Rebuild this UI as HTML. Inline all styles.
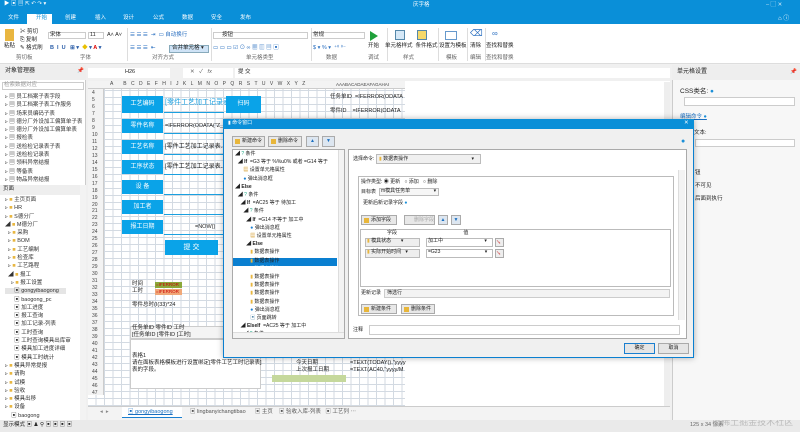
<!DOCTYPE html>
<html><head><meta charset="utf-8"><style>
*{margin:0;padding:0;box-sizing:border-box}
body{width:800px;height:432px;overflow:hidden;background:#f0f0f0;font-family:"Liberation Sans","Noto Sans CJK SC",sans-serif;font-size:6px;color:#222;position:relative}
.a{position:absolute}
.t{position:absolute;white-space:nowrap;font-size:5.5px;line-height:7px}
.blue{background:#0aa3e8;color:#fff;text-align:center;font-size:6px}
.btn{position:absolute;background:#e8e8e8;border:1px solid #aaa;font-size:5px;line-height:8px;padding-left:9px;white-space:nowrap}
.ico{position:absolute;width:5px;height:5px;background:#e8b63a;left:2px;top:1.5px}
</style></head><body>
<div class="a" style="left:0;top:0;width:800px;height:24px;background:#0a8fd8"></div>
<div class="t" style="left:4px;top:1px;color:#fff">▶ ▣ ▤ ⇱ ↶ ↷ ▾</div>
<div class="t" style="left:413px;top:2px;color:#fff">庆字格</div>
<div class="t" style="left:766px;top:2px;color:#cfe8f7">–  ▢  ✕</div>
<div class="t" style="left:778px;top:16px;color:#fff;font-size:6px">⌂ ⓘ</div>
<div class="a" style="left:27px;top:14px;width:25px;height:11px;background:#fff"></div>
<div class="t" style="left:8px;top:15px;color:#fff">文件</div>
<div class="t" style="left:36px;top:15px;color:#0a8fd8">开始</div>
<div class="t" style="left:65px;top:15px;color:#fff">创建</div>
<div class="t" style="left:95px;top:15px;color:#fff">插入</div>
<div class="t" style="left:123px;top:15px;color:#fff">设计</div>
<div class="t" style="left:153px;top:15px;color:#fff">公式</div>
<div class="t" style="left:182px;top:15px;color:#fff">数据</div>
<div class="t" style="left:211px;top:15px;color:#fff">安全</div>
<div class="t" style="left:240px;top:15px;color:#fff">发布</div>
<div class="a" style="left:0;top:24px;width:800px;height:40px;background:#fff;border-bottom:1px solid #ddd"></div>
<div class="a" style="left:5px;top:29px;width:9px;height:12px;background:#e9b640"></div>
<div class="t" style="left:4px;top:43px">粘贴</div>
<div class="t" style="left:20px;top:28px;line-height:8px">✂ 剪切<br>⎘ 复制<br>✎ 格式刷</div>
<div class="t" style="left:16px;top:55px;color:#666">剪切板</div>
<div class="a" style="left:48px;top:32px;width:38px;height:7px;border:1px solid #ccc"></div><div class="t" style="left:50px;top:32px">宋体</div>
<div class="a" style="left:88px;top:32px;width:16px;height:7px;border:1px solid #ccc"></div><div class="t" style="left:90px;top:32px">11</div>
<div class="t" style="left:107px;top:32px">A˄ A˅</div>
<div class="t" style="left:50px;top:45px;color:#2a5da8;font-weight:bold">B &nbsp;I &nbsp;U &nbsp;&nbsp;⊞ ▾ &nbsp;<span style="color:#e8c000">◆</span> ▾ <span style="color:#d00">A</span> ▾</div>
<div class="t" style="left:80px;top:55px;color:#666">字体</div>
<div class="a" style="left:127px;top:28px;width:1px;height:33px;background:#ddd"></div>
<div class="t" style="left:130px;top:32px;color:#2a6fc0">☰ ☰ ☰ &nbsp;⇥ &nbsp;▭ 自动换行</div>
<div class="t" style="left:130px;top:45px;color:#2a6fc0">☰ ☰ ☰ &nbsp;⇤</div>
<div class="a" style="left:169px;top:45px;width:40px;height:8px;background:#cfe3f6;border:1px solid #8ab"></div><div class="t" style="left:172px;top:45px">合并单元格 ▾</div>
<div class="t" style="left:152px;top:55px;color:#666">对齐方式</div>
<div class="a" style="left:211px;top:28px;width:1px;height:33px;background:#ddd"></div>
<div class="a" style="left:213px;top:32px;width:95px;height:7px;border:1px solid #ccc"></div><div class="t" style="left:222px;top:32px">按钮</div>
<div class="t" style="left:213px;top:45px;color:#2a6fc0">▭ ▭ ▭ ☑ ⊙ ∞ ▦ ▥ ▤ ▣</div>
<div class="t" style="left:246px;top:55px;color:#666">单元格类型</div>
<div class="a" style="left:311px;top:28px;width:1px;height:33px;background:#ddd"></div>
<div class="a" style="left:311px;top:32px;width:54px;height:7px;border:1px solid #ccc"></div><div class="t" style="left:313px;top:32px">常规</div>
<div class="t" style="left:313px;top:45px;color:#2a6fc0">$ ▾ % ▾ &nbsp;⁺⁰ ⁰⁻</div>
<div class="t" style="left:326px;top:55px;color:#666">数据</div>
<div class="a" style="left:370px;top:31px;width:0;height:0;border-left:8px solid #1fa03a;border-top:5px solid transparent;border-bottom:5px solid transparent"></div>
<div class="t" style="left:368px;top:43px">开始</div><div class="t" style="left:368px;top:55px;color:#666">调试</div>
<div class="a" style="left:387px;top:28px;width:1px;height:33px;background:#ddd"></div>
<div class="a" style="left:395px;top:30px;width:10px;height:10px;border:1px solid #58a;background:#d5e8f7"></div>
<div class="a" style="left:417px;top:30px;width:10px;height:10px;border:1px solid #58a;background:#f5d96a"></div>
<div class="t" style="left:385px;top:43px">单元格样式 &nbsp;条件格式</div>
<div class="t" style="left:403px;top:55px;color:#666">样式</div>
<div class="a" style="left:438px;top:28px;width:1px;height:33px;background:#ddd"></div>
<div class="a" style="left:445px;top:31px;width:12px;height:9px;border:1px solid #69c"></div>
<div class="t" style="left:439px;top:43px">设置为模板</div><div class="t" style="left:446px;top:55px;color:#666">模板</div>
<div class="a" style="left:467px;top:28px;width:1px;height:33px;background:#ddd"></div>
<div class="t" style="left:470px;top:30px;color:#2a6fc0;font-size:9px">⌫</div>
<div class="t" style="left:470px;top:43px">清除</div><div class="t" style="left:470px;top:55px;color:#666">编辑</div>
<div class="a" style="left:485px;top:28px;width:1px;height:33px;background:#ddd"></div>
<div class="t" style="left:492px;top:30px;color:#2a6fc0;font-size:8px">∞</div>
<div class="t" style="left:486px;top:43px">查找和替换</div><div class="t" style="left:486px;top:55px;color:#666">查找和替换</div>
<div class="a" style="left:0;top:65px;width:86px;height:355px;background:#fff;border-right:1px solid #ccc"></div>
<div class="a" style="left:0;top:65px;width:86px;height:15px;background:#eee"></div>
<div class="t" style="left:5px;top:68px;font-size:6px">对象管理器</div><div class="t" style="left:77px;top:68px">📌</div>
<div class="a" style="left:2px;top:82px;width:82px;height:8px;border:1px solid #ccc"></div>
<div class="t" style="left:4px;top:82px;color:#999">检索数据对应</div>
<div class="t" style="left:5px;top:93px;line-height:8.3px;color:#333">▹ ▤ 员工档案子表字段<br>▹ ▤ 员工档案子表工作服务<br>▹ ▤ 场来员编码子表<br>▹ ▤ 德分厂外设加工偏算单子表<br>▹ ▤ 德分厂外设加工偏算单表<br>▹ ▤ 报检表<br>▹ ▤ 送检检记录表子表<br>▹ ▤ 送检检记录表<br>▹ ▤ 领料异常结报<br>▹ ▤ 等备表<br>▹ ▤ 物品异常结报</div>
<div class="a" style="left:0;top:185px;width:80px;height:10px;background:#eee"></div>
<div class="t" style="left:3px;top:186px">页面</div>
<div class="t" style="left:5px;top:196px;line-height:8.3px;color:#333">▹ <span style="color:#e8b640">■</span> 主页页面<br>▹ <span style="color:#e8b640">■</span> HR<br>▹ <span style="color:#e8b640">■</span> S德分厂<br>◢ <span style="color:#e8b640">■</span> M德分厂<br>&nbsp;&nbsp;▹ <span style="color:#e8b640">■</span> 采购<br>&nbsp;&nbsp;▹ <span style="color:#e8b640">■</span> BOM<br>&nbsp;&nbsp;▹ <span style="color:#e8b640">■</span> 工艺编制<br>&nbsp;&nbsp;▹ <span style="color:#e8b640">■</span> 检查库<br>&nbsp;&nbsp;▹ <span style="color:#e8b640">■</span> 工艺路程<br>&nbsp;&nbsp;◢ <span style="color:#e8b640">■</span> 报工<br>&nbsp;&nbsp;&nbsp;&nbsp;▹ <span style="color:#e8b640">■</span> 报工设置<br><span style="background:#e5e5e5">&nbsp;&nbsp;&nbsp;&nbsp;&nbsp;&nbsp;▣ gongyibaogong&nbsp;&nbsp;&nbsp;&nbsp;&nbsp;</span><br>&nbsp;&nbsp;&nbsp;&nbsp;&nbsp;&nbsp;▣ baogong_pc<br>&nbsp;&nbsp;&nbsp;&nbsp;&nbsp;&nbsp;▣ 加工进度<br>&nbsp;&nbsp;&nbsp;&nbsp;&nbsp;&nbsp;▣ 报工查询<br>&nbsp;&nbsp;&nbsp;&nbsp;&nbsp;&nbsp;▣ 加工记录-列表<br>&nbsp;&nbsp;&nbsp;&nbsp;&nbsp;&nbsp;▣ 工时查询<br>&nbsp;&nbsp;&nbsp;&nbsp;&nbsp;&nbsp;▣ 工时查询模具出库审<br>&nbsp;&nbsp;&nbsp;&nbsp;&nbsp;&nbsp;▣ 模具加工进度详细<br>&nbsp;&nbsp;&nbsp;&nbsp;&nbsp;&nbsp;▣ 模具工时统计<br>▹ <span style="color:#e8b640">■</span> 模具异常提报<br>▹ <span style="color:#e8b640">■</span> 请购<br>▹ <span style="color:#e8b640">■</span> 试模<br>▹ <span style="color:#e8b640">■</span> 验收<br>▹ <span style="color:#e8b640">■</span> 模具出移<br>▹ <span style="color:#e8b640">■</span> 设备<br>&nbsp;&nbsp;&nbsp;&nbsp;▣ baogong</div>
<div class="a" style="left:80px;top:185px;width:6px;height:235px;background:#f3f3f3"></div>
<div class="a" style="left:88px;top:68px;width:82px;height:10px;background:#fff"></div>
<div class="t" style="left:125px;top:69px">H26</div>
<div class="a" style="left:183px;top:68px;width:50px;height:10px;background:#fff"></div>
<div class="t" style="left:190px;top:69px;color:#666">✕ &nbsp;&nbsp;✓ &nbsp;&nbsp;<i>fx</i></div>
<div class="a" style="left:235px;top:68px;width:435px;height:10px;background:#fff"></div>
<div class="t" style="left:238px;top:69px">提 交</div>
<div class="a" style="left:88px;top:81px;width:582px;height:325px;background:#fff"></div>
<div class="a" style="left:88px;top:81px;width:317px;height:325px;background-image:linear-gradient(#d3dae2 1px,transparent 1px),linear-gradient(90deg,#d3dae2 1px,transparent 1px);background-size:8.5px 7px;background-position:16px 9px"></div>
<div class="a" style="left:88px;top:81px;width:317px;height:8px;background:#f3f3f3;border-bottom:1px solid #ccc"></div>
<div class="t" style="left:110px;top:81px;font-size:5px;letter-spacing:4.4px;color:#444">A BCDEFHIJKLMNOPQRSTUVWXYZ</div>
<div class="t" style="left:336px;top:81px;font-size:4.5px;color:#444">AAABACADAEAFAGAHAI</div>
<div class="a" style="left:88px;top:89px;width:16px;height:306px;background:#f3f3f3;border-right:1px solid #ccc"></div>
<div class="t" style="left:92px;top:90px;font-size:5px;line-height:6.97px;color:#444">4<br>5<br>6<br>7<br>8<br>9<br>10<br>11<br>12<br>13<br>14<br>15<br>16<br>17<br>18<br>19<br>20<br>21<br>22<br>23<br>24<br>25<br>26<br>27<br>28<br>29<br>30<br>31<br>32<br>33<br>34<br>35<br>36<br>37<br>38<br>39<br>40<br>41<br>42<br>43<br>44<br>45<br>46<br>47</div>
<div class="a blue" style="left:122px;top:96px;width:41px;height:17px;line-height:17px">工艺编码</div>
<div class="t" style="left:165px;top:99px;color:#1aa0e0;font-size:7px">[零件工艺加工记录表</div>
<div class="a blue" style="left:226px;top:96px;width:35px;height:17px;line-height:17px">扫码</div>
<div class="a blue" style="left:122px;top:119px;width:41px;height:14px;line-height:14px">零件名称</div>
<div class="t" style="left:165px;top:123px">=IFERROR(ODATA("Z_Y_</div>
<div class="a blue" style="left:122px;top:140px;width:41px;height:14px;line-height:14px">工艺名称</div>
<div class="t" style="left:165px;top:144px;font-size:6px">[零件工艺加工记录表.工</div>
<div class="a blue" style="left:122px;top:160px;width:41px;height:14px;line-height:14px">工序状态</div>
<div class="t" style="left:165px;top:164px;font-size:6px">[零件工艺加工记录表.工</div>
<div class="a blue" style="left:122px;top:180px;width:41px;height:14px;line-height:14px">设 备</div>
<div class="a blue" style="left:122px;top:200px;width:41px;height:14px;line-height:14px">加工者</div>
<div class="a blue" style="left:122px;top:220px;width:41px;height:14px;line-height:14px">报工日期</div>
<div class="t" style="left:195px;top:224px">=NOW()</div>
<div class="a" style="left:164px;top:112px;width:60px;height:1px;background:#1aa0e0"></div>
<div class="a" style="left:164px;top:133px;width:60px;height:1px;background:#1aa0e0"></div>
<div class="a" style="left:164px;top:154px;width:60px;height:1px;background:#1aa0e0"></div>
<div class="a" style="left:164px;top:174px;width:60px;height:1px;background:#1aa0e0"></div>
<div class="a" style="left:164px;top:194px;width:60px;height:1px;background:#1aa0e0"></div>
<div class="a" style="left:164px;top:214px;width:60px;height:1px;background:#1aa0e0"></div>
<div class="a" style="left:164px;top:234px;width:60px;height:1px;background:#1aa0e0"></div>
<div class="a blue" style="left:165px;top:240px;width:53px;height:15px;line-height:15px;font-size:7px">提 交</div>
<div class="t" style="left:132px;top:281px">时间</div>
<div class="a" style="left:155px;top:282px;width:27px;height:6px;background:#8aa83a"></div><div class="t" style="left:156px;top:281px;color:#c00;font-size:4.5px">=IFERROR</div>
<div class="t" style="left:132px;top:288px">工时</div>
<div class="a" style="left:155px;top:289px;width:27px;height:6px;background:#f0a878"></div><div class="t" style="left:156px;top:288px;color:#c00;font-size:4.5px">=IFERROR</div>
<div class="t" style="left:132px;top:302px">零件总时(I(33)*24</div>
<div class="a" style="left:130px;top:326px;width:130px;height:13px;background:#f4f4f4;border:1px solid #ccc"></div>
<div class="t" style="left:132px;top:325px">任务单ID 零件ID 工时<br>[任务单ID [零件ID [工时]</div>
<div class="a" style="left:130px;top:339px;width:131px;height:50px;border:1px solid #ccc;background:#fff"></div>
<div class="t" style="left:132px;top:353px">表格1<br>请在面板表格模板进行设置绑定[零件工艺工时记录表]<br>表的字段。</div>
<div class="t" style="left:296px;top:360px">今天日期<br>上次报工日期</div>
<div class="t" style="left:350px;top:360px">=TEXT(TODAY(),"yyyy<br>=TEXT(AC40,"yyyy/M</div>
<div class="a" style="left:272px;top:375px;width:74px;height:7px;background:#c5d89c"></div>
<div class="t" style="left:330px;top:90px;line-height:14px">任务单ID &nbsp;=IFERROR(ODATA<br>零件ID &nbsp;&nbsp;&nbsp;=IFERROR(ODATA</div>
<div class="a" style="left:664px;top:82px;width:6px;height:324px;background:#eee"></div>
<div class="a" style="left:88px;top:406px;width:582px;height:14px;background:#f3f3f3;border-top:1px solid #ccc"></div>
<div class="t" style="left:100px;top:409px;color:#888">◂ &nbsp;▸</div>
<div class="a" style="left:122px;top:407px;width:60px;height:11px;background:#fff;border-bottom:1px solid #1a7fd0"></div>
<div class="t" style="left:128px;top:409px;color:#1a6fc0;text-decoration:underline">▣ gongyibaogong</div>
<div class="t" style="left:190px;top:409px;color:#555">▣ lingbanyichangtibao &nbsp;&nbsp;&nbsp;&nbsp;&nbsp;▣ 主页 &nbsp;&nbsp;&nbsp;▣ 验收入库-列表 &nbsp;&nbsp;▣ 工艺列 ⋯</div>
<div class="a" style="left:0;top:420px;width:800px;height:12px;background:#eaeaea"></div>
<div class="t" style="left:3px;top:422px">显示模式 ▣ ♟ ⚲ ▣ ▣ ▣ ▣</div>
<div class="t" style="left:690px;top:422px;color:#666">125 x 34 像素</div>
<div class="t" style="left:712px;top:417px;color:#bbb;font-size:9px;line-height:11px">@稀土掘金技术社区</div>
<div class="a" style="left:672px;top:65px;width:128px;height:355px;background:#f7f7f7;border-left:1px solid #ccc"></div>
<div class="a" style="left:672px;top:65px;width:128px;height:15px;background:#eee"></div>
<div class="t" style="left:677px;top:69px;font-size:6px">单元格设置</div><div class="t" style="left:790px;top:69px">📌</div>
<div class="t" style="left:680px;top:88px;font-size:6.5px">CSS类名: <span style="color:#1a8fd8">●</span></div>
<div class="a" style="left:684px;top:97px;width:111px;height:9px;background:#fff;border:1px solid #ccc"></div>
<div class="t" style="left:680px;top:114px;color:#1a6fc0;text-decoration:underline">编辑命令 <span style="color:#1a8fd8">●</span></div>
<div class="t" style="left:694px;top:130px">文本:</div>
<div class="a" style="left:695px;top:139px;width:100px;height:8px;background:#fff;border:1px solid #ccc"></div>
<div class="t" style="left:695px;top:167px;line-height:13px">钮<br>不可见<br>后面到执行</div>
<div class="a" style="left:223px;top:119px;width:471px;height:239px;background:#f0f0f0;border:1px solid #0a7fd0;box-shadow:0 0 6px rgba(0,0,0,.3)"></div>
<div class="a" style="left:223px;top:119px;width:471px;height:10px;background:#0a8fd8"></div>
<div class="t" style="left:228px;top:120px;color:#fff;font-size:5px">▮ 命令窗口</div>
<div class="t" style="left:684px;top:120px;color:#fff">✕</div>
<div class="btn" style="left:232px;top:136px;width:33px;height:11px">新建命令<span class="ico"></span></div>
<div class="btn" style="left:268px;top:136px;width:34px;height:11px">删除命令<span class="ico"></span></div>
<div class="a" style="left:306px;top:136px;width:13px;height:11px;background:#dde6f0;border:1px solid #aaa;color:#1a6fc0;font-size:5px;text-align:center;line-height:9px">▲</div>
<div class="a" style="left:322px;top:136px;width:13px;height:11px;background:#dde6f0;border:1px solid #aaa;color:#1a6fc0;font-size:5px;text-align:center;line-height:9px">▼</div>
<div class="t" style="left:681px;top:138px;color:#1a8fd8;font-size:7px">●</div>
<div class="a" style="left:232px;top:149px;width:113px;height:190px;background:#fff;border:1px solid #aaa"></div>
<div class="a" style="left:233px;top:258px;width:104px;height:8px;background:#0a7fd0"></div>
<div class="t" style="left:235px;top:150px;line-height:8.2px;font-size:5px">◢ <span style="color:#2a8">?</span> 条件<br>&nbsp;&nbsp;◢ <b>If</b> &nbsp;=G3 等于 %%u0% 或者 =G14 等于<br>&nbsp;&nbsp;&nbsp;&nbsp;&nbsp;&nbsp;<span style="color:#c80">▦</span> 设置单元格属性<br>&nbsp;&nbsp;&nbsp;&nbsp;&nbsp;&nbsp;<span style="color:#1a7fd0">●</span> 弹出消息框<br>◢ <b>Else</b><br>&nbsp;&nbsp;◢ <span style="color:#2a8">?</span> 条件<br>&nbsp;&nbsp;&nbsp;&nbsp;◢ <b>If</b> &nbsp;=AC25 等于 待加工<br>&nbsp;&nbsp;&nbsp;&nbsp;&nbsp;&nbsp;◢ <span style="color:#2a8">?</span> 条件<br>&nbsp;&nbsp;&nbsp;&nbsp;&nbsp;&nbsp;&nbsp;&nbsp;◢ <b>If</b> &nbsp;=G14 不等于 加工中<br>&nbsp;&nbsp;&nbsp;&nbsp;&nbsp;&nbsp;&nbsp;&nbsp;&nbsp;&nbsp;&nbsp;<span style="color:#1a7fd0">●</span> 弹出消息框<br>&nbsp;&nbsp;&nbsp;&nbsp;&nbsp;&nbsp;&nbsp;&nbsp;&nbsp;&nbsp;&nbsp;<span style="color:#c80">▦</span> 设置单元格属性<br>&nbsp;&nbsp;&nbsp;&nbsp;&nbsp;&nbsp;&nbsp;&nbsp;◢ <b>Else</b><br>&nbsp;&nbsp;&nbsp;&nbsp;&nbsp;&nbsp;&nbsp;&nbsp;&nbsp;&nbsp;&nbsp;<span style="color:#e8b640">▮</span> 数据表操作<br>&nbsp;&nbsp;&nbsp;&nbsp;&nbsp;&nbsp;&nbsp;&nbsp;&nbsp;&nbsp;&nbsp;<span style="color:#e8b640">▮</span> 数据表操作<br><span style="color:#fff">&nbsp;&nbsp;&nbsp;&nbsp;&nbsp;&nbsp;&nbsp;&nbsp;&nbsp;&nbsp;&nbsp;▮ 数据表操作</span><br>&nbsp;&nbsp;&nbsp;&nbsp;&nbsp;&nbsp;&nbsp;&nbsp;&nbsp;&nbsp;&nbsp;<span style="color:#e8b640">▮</span> 数据表操作<br>&nbsp;&nbsp;&nbsp;&nbsp;&nbsp;&nbsp;&nbsp;&nbsp;&nbsp;&nbsp;&nbsp;<span style="color:#e8b640">▮</span> 数据表操作<br>&nbsp;&nbsp;&nbsp;&nbsp;&nbsp;&nbsp;&nbsp;&nbsp;&nbsp;&nbsp;&nbsp;<span style="color:#e8b640">▮</span> 数据表操作<br>&nbsp;&nbsp;&nbsp;&nbsp;&nbsp;&nbsp;&nbsp;&nbsp;&nbsp;&nbsp;&nbsp;<span style="color:#e8b640">▮</span> 数据表操作<br>&nbsp;&nbsp;&nbsp;&nbsp;&nbsp;&nbsp;&nbsp;&nbsp;&nbsp;&nbsp;&nbsp;<span style="color:#1a7fd0">●</span> 弹出消息框<br>&nbsp;&nbsp;&nbsp;&nbsp;&nbsp;&nbsp;&nbsp;&nbsp;&nbsp;&nbsp;&nbsp;<span style="color:#58a">▣</span> 页面跳转<br>&nbsp;&nbsp;&nbsp;&nbsp;◢ <b>ElseIf</b> &nbsp;=AC25 等于 加工中<br>&nbsp;&nbsp;&nbsp;&nbsp;&nbsp;&nbsp;◢ <span style="color:#2a8">?</span> 条件</div>
<div class="a" style="left:338px;top:150px;width:6px;height:183px;background:#f3f3f3;border-left:1px solid #ddd"></div>
<div class="a" style="left:233px;top:332px;width:111px;height:6px;background:#f3f3f3;border-top:1px solid #ddd"></div>
<div class="a" style="left:348px;top:149px;width:339px;height:190px;background:#fff;border:1px solid #aaa"></div>
<div class="t" style="left:353px;top:156px;font-size:5px">选择命令:</div>
<div class="a" style="left:376px;top:154px;width:105px;height:10px;background:#f0f0f0;border:1px solid #bbb"></div>
<div class="t" style="left:379px;top:156px;font-size:5px"><span style="color:#e8b640">▮</span> 数据表操作 <span style="margin-left:62px">▾</span></div>
<div class="a" style="left:678px;top:170px;width:7px;height:150px;background:#f3f3f3;border-left:1px solid #ddd"></div>
<div class="a" style="left:358px;top:176px;width:316px;height:140px;border:1px solid #bbb;background:#fff"></div>
<div class="t" style="left:361px;top:179px;font-size:5px">操作类型: ◉ 更新 &nbsp;&nbsp;○ 添加 &nbsp;&nbsp;○ 删除</div>
<div class="t" style="left:361px;top:189px;font-size:5px">目标表</div>
<div class="a" style="left:379px;top:188px;width:60px;height:8px;border:1px solid #bbb;background:#f6f6f6"></div>
<div class="t" style="left:381px;top:188px;font-size:5px">m模具任务单 <span style="margin-left:22px">▾</span></div>
<div class="t" style="left:363px;top:200px;font-size:5px">更新后新记录字段 <span style="color:#1a8fd8">●</span></div>
<div class="btn" style="left:361px;top:215px;width:36px;height:10px">添加字段<span class="ico"></span></div>
<div class="btn" style="left:404px;top:215px;width:31px;height:10px;color:#aaa">删除字段</div>
<div class="a" style="left:438px;top:215px;width:10px;height:10px;background:#dde6f0;border:1px solid #aaa;color:#1a6fc0;font-size:5px;text-align:center;line-height:8px">▲</div>
<div class="a" style="left:451px;top:215px;width:10px;height:10px;background:#dde6f0;border:1px solid #aaa;color:#1a6fc0;font-size:5px;text-align:center;line-height:8px">▼</div>
<div class="a" style="left:360px;top:229px;width:311px;height:58px;border:1px solid #bbb"></div>
<div class="t" style="left:387px;top:230px;font-size:5px">字段 <span style="margin-left:65px">值</span></div>
<div class="a" style="left:365px;top:238px;width:55px;height:9px;background:#eee;border:1px solid #bbb"></div><div class="t" style="left:367px;top:238px;font-size:5px"><span style="color:#e8b640">▮</span> 模具状态 &nbsp;&nbsp;&nbsp;&nbsp;&nbsp;&nbsp;▾</div>
<div class="a" style="left:426px;top:238px;width:67px;height:9px;background:#fff;border:1px solid #bbb"></div><div class="t" style="left:428px;top:238px;font-size:5px">加工中 <span style="margin-left:40px">▾</span></div>
<div class="a" style="left:495px;top:238px;width:9px;height:9px;background:#eee;border:1px solid #aaa;color:#c33;font-size:5px">↘</div>
<div class="a" style="left:365px;top:249px;width:55px;height:9px;background:#eee;border:1px solid #bbb"></div><div class="t" style="left:367px;top:249px;font-size:5px"><span style="color:#e8b640">▮</span> 实际开始时间 &nbsp;&nbsp;▾</div>
<div class="a" style="left:426px;top:249px;width:67px;height:9px;background:#fff;border:1px solid #bbb"></div><div class="t" style="left:428px;top:249px;font-size:5px">=G23 <span style="margin-left:43px">▾</span></div>
<div class="a" style="left:495px;top:249px;width:9px;height:9px;background:#eee;border:1px solid #aaa;color:#c33;font-size:5px">↘</div>
<div class="t" style="left:361px;top:290px;font-size:5px">更新记录</div>
<div class="a" style="left:384px;top:289px;width:286px;height:9px;background:#f3f3f3;border:1px solid #ccc"></div><div class="t" style="left:387px;top:290px;font-size:5px">筛选行</div>
<div class="btn" style="left:361px;top:304px;width:36px;height:10px">新建条件<span class="ico"></span></div>
<div class="btn" style="left:401px;top:304px;width:34px;height:10px">删除条件<span class="ico"></span></div>
<div class="t" style="left:353px;top:327px;font-size:5px">注释</div>
<div class="a" style="left:369px;top:325px;width:311px;height:10px;background:#fff;border:1px solid #ccc"></div>
<div class="a" style="left:624px;top:343px;width:31px;height:11px;background:#e5e5e5;border:1px solid #1a7fd0;text-align:center;font-size:5px;line-height:9px">确定</div>
<div class="a" style="left:658px;top:343px;width:31px;height:11px;background:#e5e5e5;border:1px solid #aaa;text-align:center;font-size:5px;line-height:9px">取消</div>
</body></html>
